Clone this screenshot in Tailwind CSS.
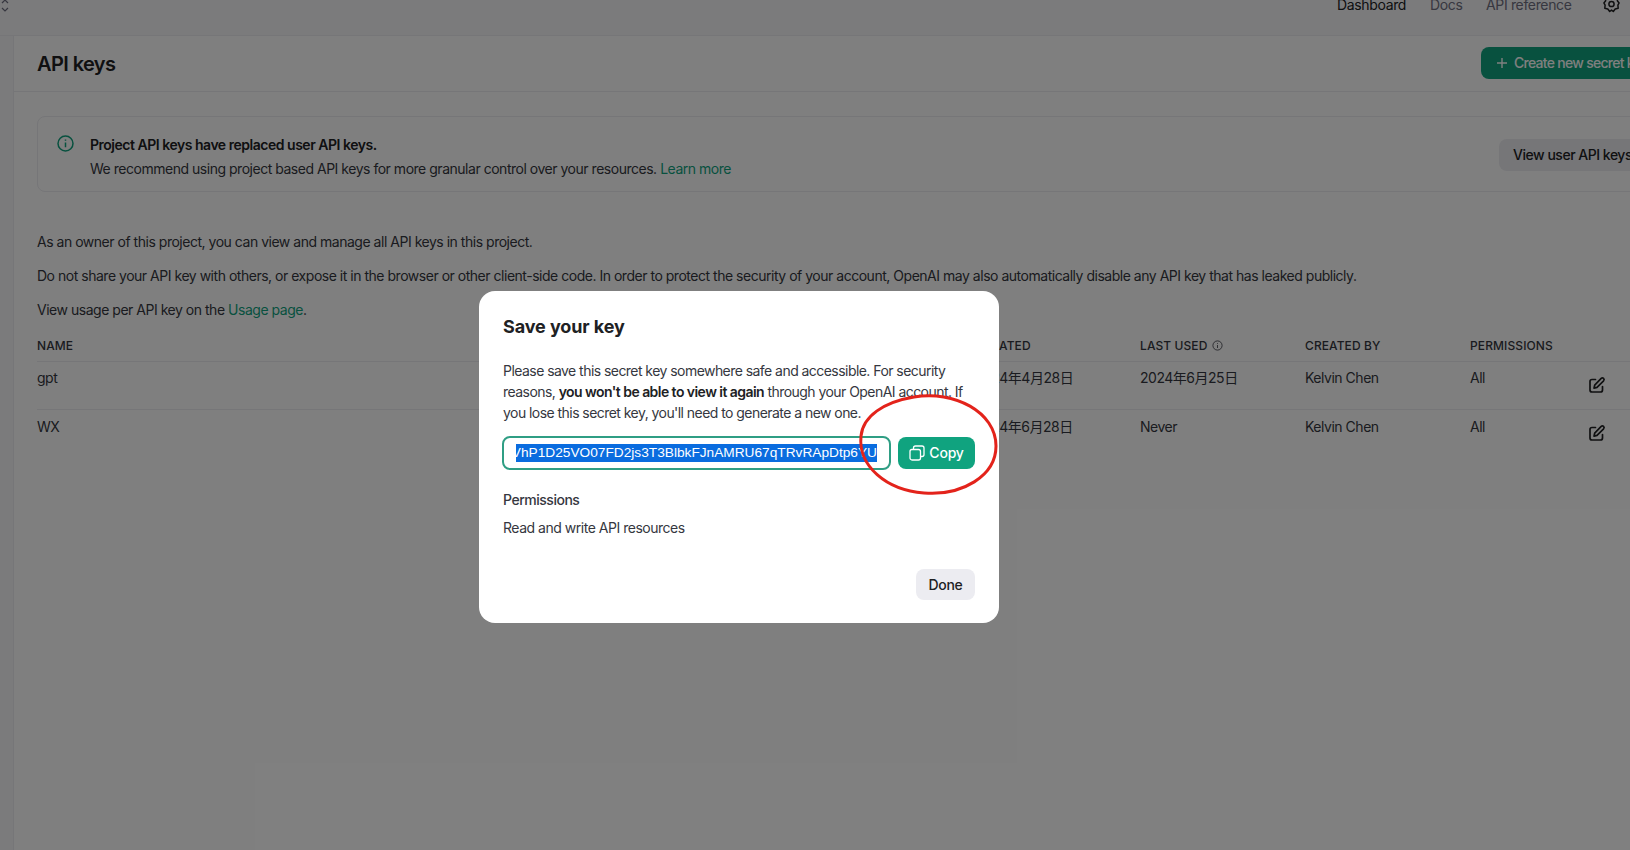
<!doctype html>
<html lang="en">
<head>
<meta charset="utf-8">
<title>API keys</title>
<script src="https://cdn.jsdelivr.net/npm/@tailwindcss/browser@4"></script>
</head>
<body class="bg-white">
<div class="relative w-[1630px] h-[850px] overflow-hidden bg-white text-[#353740] text-sm font-['Inter','Noto_Sans_CJK_SC',sans-serif] tracking-[-0.48px]">
  <!-- top bar -->
  <header class="h-[36px] bg-[#f7f7f8] border-b border-[#ececf1] flex items-start justify-between">
    <svg class="w-[10px] h-[14px] ml-0 -mt-[1px] text-[#6e6e80]" viewBox="0 0 10 14" fill="none" stroke="currentColor" stroke-width="1.2"><path d="M2 4l3-3 3 3M2 9l3 3 3-3"/></svg>
    <nav class="flex items-center -mt-[5px] text-[14px] tracking-[-0.35px]">
      <span class="text-[#202123] w-[93px]">Dashboard</span>
      <span class="text-[#6e6e80] w-[56px]">Docs</span>
      <span class="text-[#6e6e80] w-[117px]">API reference</span>
      <svg class="w-[17px] h-[17px] mr-[10px] -mt-[2px] text-[#202123]" viewBox="0 0 17 17" fill="none" stroke="currentColor" stroke-width="1.5" stroke-linejoin="round"><path d="M8.5 1l2.2 1.6 3.2-.4.6 2.8 1.6 1.9-1.2 2.2.3 3.2-3 .7-1.9 2.5-1.8-1.4-1.8 1.4-1.9-2.5-3-.7.3-3.2L.9 6.9 2.5 5l.6-2.8 3.2.4z"/><circle cx="8.5" cy="8" r="2.6"/></svg>
    </nav>
  </header>
  <div class="flex h-[814px]">
    <aside class="w-[14px] shrink-0 bg-[#f7f7f8] border-r border-[#ececf1]"></aside>
    <main class="w-[1616px] shrink-0">
      <div class="h-[56px] border-b border-[#ececf1] pl-[23px] flex items-center justify-between">
        <h1 class="text-[20px] font-semibold text-[#202123] tracking-[-0.6px] mt-[1px]">API keys</h1>
        <div class="w-[149px] h-[32px] mt-[-1px] overflow-hidden rounded-l-lg bg-[#10a37f] text-white font-medium tracking-[-0.72px] flex items-center gap-[6px] pl-[15px] whitespace-nowrap">
          <svg class="w-[12px] h-[12px] shrink-0" viewBox="0 0 12 12" fill="none" stroke="currentColor" stroke-width="1.4"><path d="M6 1v10M1 6h10"/></svg>
          <span>Create new secret key</span>
        </div>
      </div>
      <div class="ml-[23px] mt-[24px] h-[76px] w-[1610px] rounded-lg border border-[#ececf1] flex items-center">
        <svg class="ml-[19px] -mt-[22px] w-[17px] h-[17px] shrink-0 text-[#10a37f]" viewBox="0 0 17 17" fill="none" stroke="currentColor" stroke-width="1.5"><circle cx="8.5" cy="8.5" r="7.5"/><path d="M8.5 7.6v4.6M8.5 4.6v1.2"/></svg>
        <div class="ml-[16px] w-[1409px] mt-[6px] leading-[24px]">
          <p class="font-semibold text-[#202123]">Project API keys have replaced user API keys.</p>
          <p>We recommend using project based API keys for more granular control over your resources. <span class="text-[#10a37f]">Learn more</span></p>
        </div>
        <div class="w-[131px] h-[32px] mt-[1px] overflow-hidden rounded-l-lg bg-[#ececf1] text-[#202123] font-medium flex items-center pl-[14px] whitespace-nowrap">View user API keys</div>
      </div>
      <div class="ml-[23px] mt-[40px] flex flex-col gap-[14px] leading-[20px]">
        <p>As an owner of this project, you can view and manage all API keys in this project.</p>
        <p>Do not share your API key with others, or expose it in the browser or other client-side code. In order to protect the security of your account, OpenAI may also automatically disable any API key that has leaked publicly.</p>
        <p>View usage per API key on the <span class="text-[#10a37f]">Usage page</span>.</p>
      </div>
      <div class="ml-[23px] mt-[8px] w-[1593px]">
        <div class="h-[34px] grid grid-cols-[938px_165px_165px_165px_1fr] items-center border-b border-[#ececf1] text-[12px] font-medium tracking-[0.1px] text-[#353740] pt-[3px]">
          <span>NAME</span><span>CREATED</span>
          <span class="flex items-center gap-[5px]">LAST USED
            <svg class="w-[11px] h-[11px]" viewBox="0 0 11 11" fill="none" stroke="currentColor" stroke-width="0.8"><circle cx="5.5" cy="5.5" r="4.6"/><path d="M5.5 5v3M5.5 3v.8"/></svg>
          </span>
          <span>CREATED BY</span><span>PERMISSIONS</span>
        </div>
        <div class="h-[48px] grid grid-cols-[938px_165px_165px_165px_119px_1fr] items-start border-b border-[#ececf1] pt-[6px]">
          <span>gpt</span><span>2024年4月28日</span><span>2024年6月25日</span><span>Kelvin Chen</span><span>All</span>
          <svg class="w-[18px] h-[18px] mt-[8px] -ml-[1px] text-[#202123]" viewBox="0 0 18 18" fill="none" stroke="currentColor" stroke-width="1.7" stroke-linecap="round" stroke-linejoin="round"><path d="M7.5 3.5H4a2 2 0 0 0-2 2V14a2 2 0 0 0 2 2h8.5a2 2 0 0 0 2-2v-3.5"/><path d="M13.2 2.4a1.7 1.7 0 0 1 2.4 2.4L9 11.4l-3 .7.7-3z"/></svg>
        </div>
        <div class="h-[48px] grid grid-cols-[938px_165px_165px_165px_119px_1fr] items-start pt-[7px]">
          <span>WX</span><span>2024年6月28日</span><span>Never</span><span>Kelvin Chen</span><span>All</span>
          <svg class="w-[18px] h-[18px] mt-[7px] -ml-[1px] text-[#202123]" viewBox="0 0 18 18" fill="none" stroke="currentColor" stroke-width="1.7" stroke-linecap="round" stroke-linejoin="round"><path d="M7.5 3.5H4a2 2 0 0 0-2 2V14a2 2 0 0 0 2 2h8.5a2 2 0 0 0 2-2v-3.5"/><path d="M13.2 2.4a1.7 1.7 0 0 1 2.4 2.4L9 11.4l-3 .7.7-3z"/></svg>
        </div>
      </div>
    </main>
  </div>

  <!-- dim layer -->
  <div class="absolute inset-0 bg-black/50"></div>

  <!-- dialog -->
  <div class="absolute left-[479px] top-[291px] w-[520px] h-[332px] rounded-[16px] bg-white px-[24px] pt-[23px] flex flex-col">
    <h2 class="text-[18px] font-bold leading-[26px] text-[#202123] tracking-[-0.1px]">Save your key</h2>
    <p class="mt-[20px] leading-[21px] text-[#353740] tracking-[-0.55px]">Please save this secret key somewhere safe and accessible. For security reasons, <b class="font-semibold text-[#202123]">you won't be able to view it again</b> through your OpenAI account. If you lose this secret key, you'll need to generate a new one.</p>
    <div class="mt-[13px] -ml-[1px] flex items-center gap-[7px]">
      <div class="w-[389px] h-[34px] rounded-lg border-2 border-[#2f9e84] flex items-center pl-[12px] shrink-0">
        <div class="w-[361px] h-[18px] overflow-hidden flex justify-end bg-[#0a6cdf] text-white whitespace-nowrap font-['Liberation_Sans',sans-serif] text-[13.7px] leading-[18px] tracking-normal"><span>VhP1D25VO07FD2js3T3BlbkFJnAMRU67qTRvRApDtp6YU</span></div>
      </div>
      <div class="w-[78px] h-[32px] rounded-lg bg-[#10a37f] text-white font-medium tracking-[-0.2px] flex items-center justify-center gap-[4px]">
        <svg class="w-[16px] h-[16px]" viewBox="0 0 16 16" fill="none" stroke="currentColor" stroke-width="1.3"><rect x="1" y="4.5" width="10.5" height="10.5" rx="2"/><path d="M4.5 4.5V3a2 2 0 0 1 2-2H13a2 2 0 0 1 2 2v6.5a2 2 0 0 1-2 2h-1.5"/></svg>
        <span>Copy</span>
      </div>
    </div>
    <p class="mt-[20px] leading-[20px] font-medium text-[#353740]">Permissions</p>
    <p class="mt-[8px] leading-[20px] text-[#353740]">Read and write API resources</p>
    <div class="mt-[31px] flex justify-end">
      <div class="w-[59px] h-[31px] rounded-lg bg-[#ececf1] text-[#202123] font-medium tracking-[-0.3px] flex items-center justify-center">Done</div>
    </div>
  </div>

  <!-- hand-drawn annotation -->
  <svg class="absolute left-[854px] top-[390px] w-[150px] h-[110px] pointer-events-none" viewBox="0 0 150 110" fill="none"><path d="M60 7C100 0 142 22 142 56c0 30-34 50-72 47C32 100 4 76 7 46 9 26 30 12 60 7z" stroke="#e3231b" stroke-width="3"/></svg>
</div>
</body>
</html>
